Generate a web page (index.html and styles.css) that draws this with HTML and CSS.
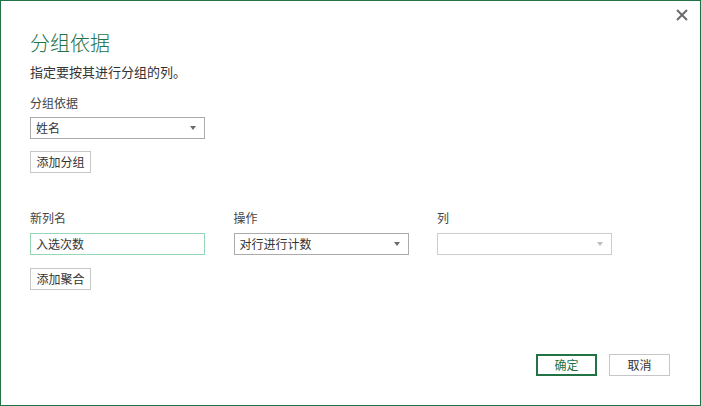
FILE: index.html
```html
<!DOCTYPE html>
<html lang="zh-CN">
<head>
<meta charset="utf-8">
<title>分组依据</title>
<link rel="stylesheet" href="styles.css">
</head>
<body>
<div class="dialog">
  <button class="close" aria-label="关闭">
    <svg width="12" height="12" viewBox="0 0 12 12"><path d="M1 1L11 11M11 1L1 11" stroke="#6b6b6b" stroke-width="2" fill="none"/></svg>
  </button>
  <h1 class="title">分组依据</h1>
  <p class="subtitle">指定要按其进行分组的列。</p>
  <div class="field">
    <div class="label">分组依据</div>
    <div class="select"><span>姓名</span><i class="arrow"></i></div>
  </div>
  <button class="btn add-group">添加分组</button>
  <div class="agg">
    <div class="field">
      <div class="label">新列名</div>
      <div class="input">入选次数</div>
    </div>
    <div class="field">
      <div class="label">操作</div>
      <div class="select"><span>对行进行计数</span><i class="arrow"></i></div>
    </div>
    <div class="field">
      <div class="label">列</div>
      <div class="select disabled"><span></span><i class="arrow"></i></div>
    </div>
  </div>
  <button class="btn add-agg">添加聚合</button>
  <div class="footer">
    <button class="btn primary">确定</button>
    <button class="btn">取消</button>
  </div>
</div>
</body>
</html>
```
FILE: styles.css
```css
* { box-sizing: border-box; }
html, body { margin: 0; padding: 0; background: #fff; }
body {
  font-family: "Noto Sans CJK SC", "Noto Sans", sans-serif;
  color: #333;
}
.dialog {
  position: relative;
  width: 701px;
  height: 406px;
  border: 1px solid #217346;
  padding: 28px 30px 29px 29px;
  display: flex;
  flex-direction: column;
  align-items: flex-start;
}
.close {
  position: absolute;
  top: 7px;
  right: 11px;
  width: 14px;
  height: 14px;
  padding: 1px;
  border: 0;
  background: none;
  display: flex;
}
.title {
  margin: 0;
  font-size: 20px;
  line-height: 28px;
  font-weight: 300;
  color: #217346;
}
.subtitle {
  margin: 6px 0 0;
  font-size: 13px;
  line-height: 18px;
  color: #333;
}
.field { display: flex; flex-direction: column; }
.dialog > .field { margin-top: 14px; }
.label {
  font-size: 12px;
  line-height: 16px;
  color: #444;
  margin-bottom: 6px;
}
.select, .input {
  width: 175px;
  height: 22px;
  border: 1px solid #ababab;
  display: flex;
  align-items: center;
  justify-content: space-between;
  padding: 0 8px 0 5px;
  font-size: 12px;
  line-height: 20px;
  color: #333;
}
.input { border-color: #98d6b8; }
.select.disabled { border-color: #cccccc; }
.arrow {
  width: 0;
  height: 0;
  border-left: 3.5px solid transparent;
  border-right: 3.5px solid transparent;
  border-top: 4px solid #6b6b6b;
}
.select.disabled .arrow { border-top-color: #bdbdbd; }
.btn {
  font-family: inherit;
  height: 22px;
  width: 61px;
  padding: 0;
  border: 1px solid #c6c6c6;
  background: #fff;
  font-size: 12px;
  line-height: 20px;
  color: #333;
}
.add-group { margin-top: 12px; }
.agg {
  margin-top: 37px;
  display: grid;
  grid-template-columns: 175px 175px 175px;
  column-gap: 28.5px;
}
.agg .label { margin-bottom: 7px; }
.add-agg { margin-top: 13px; }
.footer {
  margin-top: auto;
  align-self: flex-end;
  display: flex;
  gap: 12px;
}
.btn.primary { border: 2px solid #217346; color: #217346; line-height: 18px; }
```
